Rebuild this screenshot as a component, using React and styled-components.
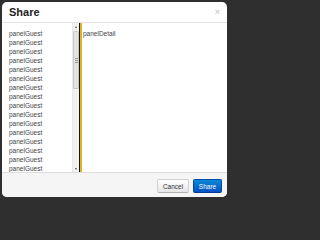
import React from 'react';
import styled, { createGlobalStyle } from 'styled-components';

const GlobalStyle = createGlobalStyle`
  html, body {
    margin: 0;
    padding: 0;
    background: #2f2f2f;
  }
  * {
    box-sizing: border-box;
  }
`;

const Frame = styled.div`
  width: 230px;
  height: 201px;
  padding: 2px 3px 4px 2px;
  font-family: 'Liberation Sans', Arial, sans-serif;
`;

const Modal = styled.div`
  height: 100%;
  display: flex;
  flex-direction: column;
  background: #fff;
  border-radius: 5px;
  overflow: hidden;
`;

const Header = styled.div`
  display: flex;
  align-items: center;
  justify-content: space-between;
  padding: 4px 7px 3px 7px;
  border-bottom: 1px solid #e5e5e5;
`;

const Title = styled.h3`
  margin: 0;
  font-size: 11px;
  line-height: 13px;
  font-weight: bold;
  color: #222;
`;

const Close = styled.span`
  font-size: 9px;
  line-height: 13px;
  font-weight: bold;
  color: #cfcfcf;
`;

const Body = styled.div`
  flex: 1;
  display: flex;
  min-height: 0;
`;

const GuestPane = styled.ul`
  width: 70px;
  margin: 0;
  padding: 6px 0 0 7px;
  list-style: none;
  overflow: hidden;
`;

const Item = styled.li`
  font-size: 6.5px;
  line-height: 9px;
  color: #444;
  white-space: nowrap;
`;

const Scrollbar = styled.div`
  width: 7px;
  display: flex;
  flex-direction: column;
  align-items: center;
  background: #f1f1f1;
  border-left: 1px solid #e8e8e8;
  padding: 3px 0 2px;
`;

const Arrow = styled.span`
  width: 0;
  height: 0;
  border-left: 1.5px solid transparent;
  border-right: 1.5px solid transparent;
  ${({ $down }) =>
    $down ? 'border-top: 2px solid #555;' : 'border-bottom: 2px solid #555;'}
`;

const Thumb = styled.div`
  width: 6px;
  height: 58px;
  margin-top: 3px;
  display: flex;
  flex-direction: column;
  align-items: center;
  justify-content: center;
  gap: 1px;
  background: #e2e2e2;
  border: 1px solid #c9c9c9;
  border-radius: 1px;
`;

const Grip = styled.span`
  width: 3px;
  height: 1px;
  background: #9a9a9a;
`;

const Track = styled.div`
  flex: 1;
`;

const Splitter = styled.div`
  width: 3px;
  border-left: 1px solid #111;
  background: #e3b21f;
`;

const DetailPane = styled.div`
  flex: 1;
  padding: 6px 0 0 1px;
  font-size: 6.5px;
  line-height: 9px;
  color: #444;
`;

const Footer = styled.div`
  display: flex;
  justify-content: flex-end;
  gap: 4px;
  padding: 6px 5px 4px;
  background: #f5f5f5;
  border-top: 1px solid #ddd;
`;

const Button = styled.button`
  height: 14px;
  width: ${({ $width }) => $width}px;
  padding: 0;
  font-family: inherit;
  font-size: 6.5px;
  border-radius: 2px;
  color: ${({ $primary }) => ($primary ? '#fff' : '#333')};
  background: ${({ $primary }) =>
    $primary
      ? 'linear-gradient(#0a8ad4, #0551c4)'
      : 'linear-gradient(#ffffff, #e6e6e6)'};
  border: 1px solid ${({ $primary }) => ($primary ? '#0547b0' : '#cfcfcf')};
  border-bottom-color: ${({ $primary }) => ($primary ? '#033a92' : '#b3b3b3')};
`;

const guests = Array.from({ length: 16 }, (_, i) => i);

function App() {
  return (
    <Frame>
      <GlobalStyle />
      <Modal>
        <Header>
          <Title>Share</Title>
          <Close>×</Close>
        </Header>
        <Body>
          <GuestPane>
            {guests.map((i) => (
              <Item key={i}>panelGuest</Item>
            ))}
          </GuestPane>
          <Scrollbar>
            <Arrow />
            <Thumb>
              <Grip />
              <Grip />
              <Grip />
            </Thumb>
            <Track />
            <Arrow $down />
          </Scrollbar>
          <Splitter />
          <DetailPane>panelDetail</DetailPane>
        </Body>
        <Footer>
          <Button $width={32}>Cancel</Button>
          <Button $width={29} $primary>
            Share
          </Button>
        </Footer>
      </Modal>
    </Frame>
  );
}

export default App;
